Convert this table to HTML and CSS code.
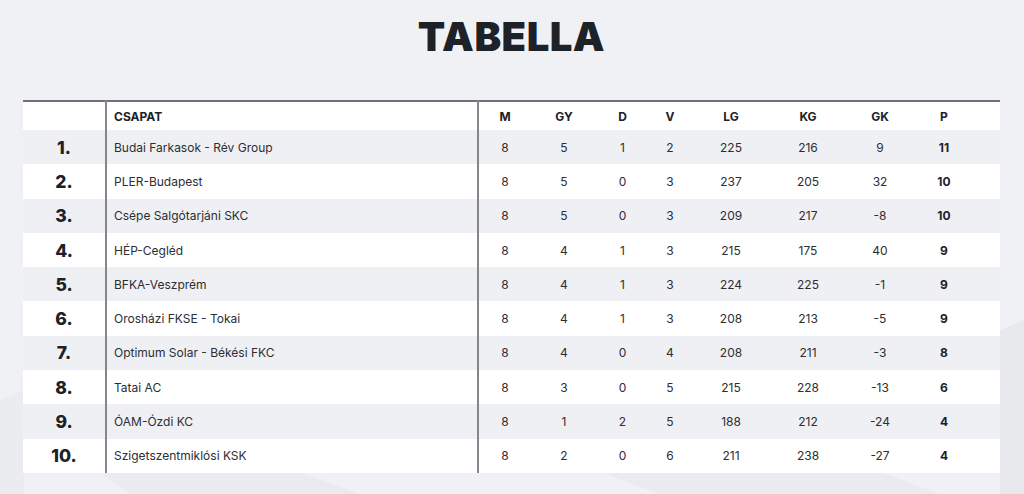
FILE: index.html
```html
<!DOCTYPE html>
<html lang="hu">
<head>
<meta charset="utf-8">
<title>Tabella</title>
<link rel="stylesheet" href="styles.css">
</head>
<body>
<svg class="bg-deco" width="1024" height="494" viewBox="0 0 1024 494" aria-hidden="true">
  <polygon points="0,400 24,390 24,494 0,494" fill="#eaecf0"/>
  <polygon points="100,472 300,472 360,494 130,494" fill="#e9ebef"/>
  <polygon points="600,472 880,472 940,494 660,494" fill="#e9ebef"/>
  <polygon points="1000,330 1024,320 1024,494 1000,494" fill="#e7e9ed"/>
</svg>
<main class="page">
  <h1 class="title">TABELLA</h1>
  <table class="standings">
    <colgroup>
      <col class="c-rank"><col class="c-team"><col class="c-m"><col class="c-gy"><col class="c-d"><col class="c-v"><col class="c-lg"><col class="c-kg"><col class="c-gk"><col class="c-p"><col class="c-pad">
    </colgroup>
    <thead>
      <tr><th class="rank"></th><th class="team">CSAPAT</th><th>M</th><th>GY</th><th>D</th><th>V</th><th>LG</th><th>KG</th><th>GK</th><th>P</th><th></th></tr>
    </thead>
    <tbody>
      <tr><td class="rank">1.</td><td class="team">Budai Farkasok - Rév Group</td><td>8</td><td>5</td><td>1</td><td>2</td><td>225</td><td>216</td><td>9</td><td class="pts">11</td><td></td></tr>
      <tr><td class="rank">2.</td><td class="team">PLER-Budapest</td><td>8</td><td>5</td><td>0</td><td>3</td><td>237</td><td>205</td><td>32</td><td class="pts">10</td><td></td></tr>
      <tr><td class="rank">3.</td><td class="team">Csépe Salgótarjáni SKC</td><td>8</td><td>5</td><td>0</td><td>3</td><td>209</td><td>217</td><td>-8</td><td class="pts">10</td><td></td></tr>
      <tr><td class="rank">4.</td><td class="team">HÉP-Cegléd</td><td>8</td><td>4</td><td>1</td><td>3</td><td>215</td><td>175</td><td>40</td><td class="pts">9</td><td></td></tr>
      <tr><td class="rank">5.</td><td class="team">BFKA-Veszprém</td><td>8</td><td>4</td><td>1</td><td>3</td><td>224</td><td>225</td><td>-1</td><td class="pts">9</td><td></td></tr>
      <tr><td class="rank">6.</td><td class="team">Orosházi FKSE - Tokai</td><td>8</td><td>4</td><td>1</td><td>3</td><td>208</td><td>213</td><td>-5</td><td class="pts">9</td><td></td></tr>
      <tr><td class="rank">7.</td><td class="team">Optimum Solar - Békési FKC</td><td>8</td><td>4</td><td>0</td><td>4</td><td>208</td><td>211</td><td>-3</td><td class="pts">8</td><td></td></tr>
      <tr><td class="rank">8.</td><td class="team">Tatai AC</td><td>8</td><td>3</td><td>0</td><td>5</td><td>215</td><td>228</td><td>-13</td><td class="pts">6</td><td></td></tr>
      <tr><td class="rank">9.</td><td class="team">ÓAM-Ózdi KC</td><td>8</td><td>1</td><td>2</td><td>5</td><td>188</td><td>212</td><td>-24</td><td class="pts">4</td><td></td></tr>
      <tr><td class="rank">10.</td><td class="team">Szigetszentmiklósi KSK</td><td>8</td><td>2</td><td>0</td><td>6</td><td>211</td><td>238</td><td>-27</td><td class="pts">4</td><td></td></tr>
    </tbody>
  </table>
</main>
</body>
</html>
```

FILE: styles.css
```css
html, body {
  margin: 0;
  padding: 0;
}
body {
  background: #f0f1f5;
  font-family: Inter, "Noto Sans", sans-serif;
  color: #2b2e33;
  position: relative;
  height: 494px;
  overflow: hidden;
}
.bg-deco {
  position: absolute;
  left: 0;
  top: 0;
  z-index: 0;
}
.page {
  position: relative;
  z-index: 1;
  padding: 0 24px 0 23px;
}
.title {
  margin: 0;
  padding-top: 13px;
  height: 100px;
  box-sizing: border-box;
  text-align: center;
  font-family: Inter, sans-serif;
  font-weight: 900;
  font-size: 40px;
  line-height: 48px;
  color: #1d2228;
  letter-spacing: 0.5px;
}
.standings {
  width: 977px;
  table-layout: fixed;
  border-collapse: collapse;
  border-top: 2px solid #6e7074;
}
.c-rank { width: 83px; }
.c-team { width: 372px; }
.c-m { width: 53px; }
.c-gy { width: 66px; }
.c-d { width: 51px; }
.c-v { width: 44px; }
.c-lg { width: 78px; }
.c-kg { width: 76px; }
.c-gk { width: 68px; }
.c-p { width: 60px; }
.c-pad { width: 26px; }
.standings th,
.standings td {
  padding: 0;
  text-align: center;
  white-space: nowrap;
}
.standings thead tr {
  background: #ffffff;
  height: 29px;
}
.standings th {
  font-size: 12px;
  font-weight: 700;
  color: #1d2228;
}
.standings tbody tr {
  height: 34.3px;
}
.standings tbody tr:nth-child(odd) {
  background: #eff0f4;
}
.standings tbody tr:nth-child(even) {
  background: #ffffff;
}
.standings td {
  font-size: 12px;
  color: #2b2e33;
}
.standings .rank {
  border-right: 2px solid #85878b;
  font-size: 17.5px;
  font-weight: 800;
  color: #1d2228;
}
.standings .team {
  border-right: 2px solid #85878b;
  text-align: left;
  padding-left: 7px;
}
.standings td.pts {
  font-weight: 700;
  color: #1d2228;
}
```
